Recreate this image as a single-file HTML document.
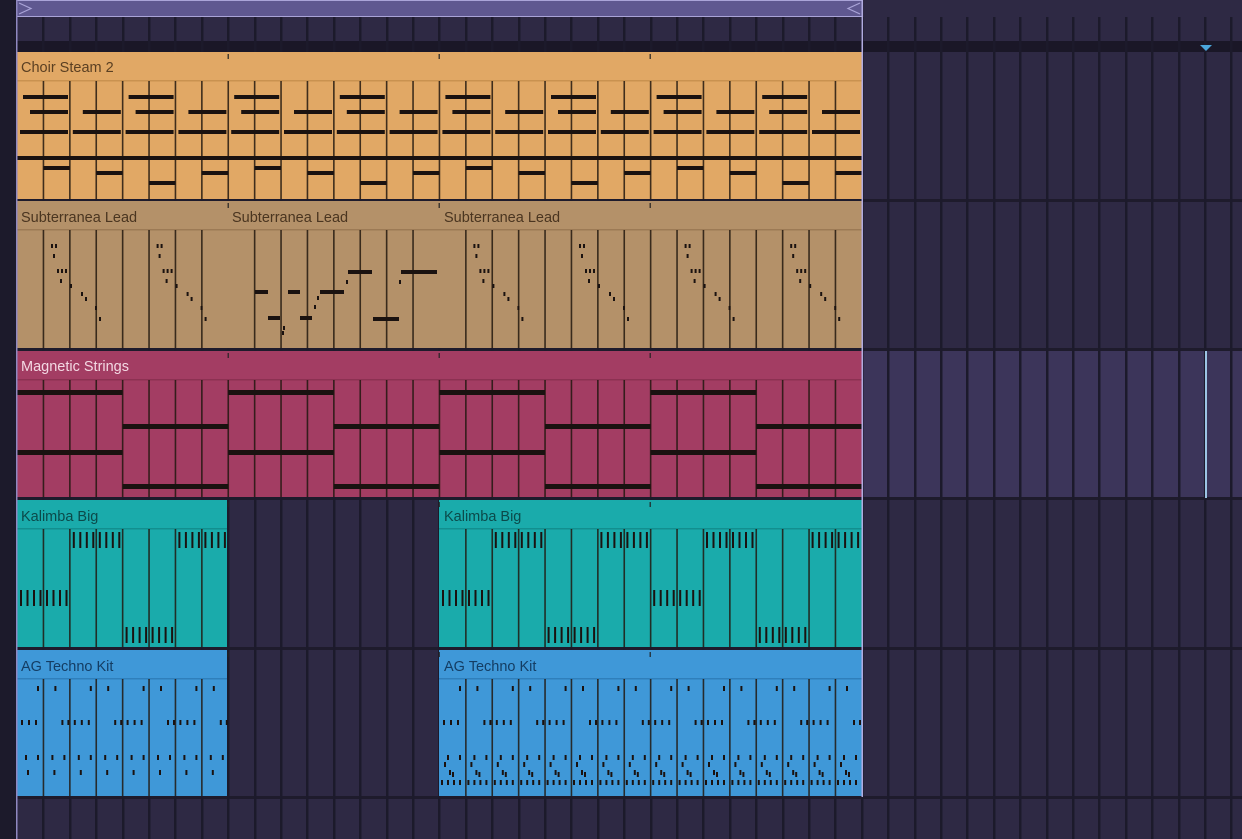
<!DOCTYPE html>
<html><head><meta charset="utf-8"><style>
html,body{margin:0;padding:0;background:#2e2944;width:1242px;height:839px;overflow:hidden}
svg{display:block}
text{font-family:"Liberation Sans",sans-serif;font-size:14.5px}
</style></head><body>
<svg id="s" width="1242" height="839" xmlns="http://www.w3.org/2000/svg">
<rect width="1242" height="839" fill="#2e2944"/>
<g id="bg"></g>
<g id="clips"></g>
<g id="notes"></g>
<g id="lines"></g>
<polyline points="19,3 31,8.5 19,14" fill="none" stroke="#aaa4d8" stroke-width="1.2"/>
<polyline points="860,3 848,8.5 860,14" fill="none" stroke="#aaa4d8" stroke-width="1.2"/>
<text x="21" y="72" fill="#5a3f22">Choir Steam 2</text>
<text x="21" y="222" fill="#4a3520">Subterranea Lead</text>
<text x="232" y="222" fill="#4a3520">Subterranea Lead</text>
<text x="444" y="222" fill="#4a3520">Subterranea Lead</text>
<text x="21" y="371" fill="#f3d8e3">Magnetic Strings</text>
<text x="21" y="521" fill="#0b4a4a">Kalimba Big</text>
<text x="444" y="521" fill="#0b4a4a">Kalimba Big</text>
<text x="21" y="671" fill="#143d63">AG Techno Kit</text>
<text x="444" y="671" fill="#143d63">AG Techno Kit</text>
</svg>
<script>
const NS="http://www.w3.org/2000/svg";
function R(g,x,y,w,h,f,o){const r=document.createElementNS(NS,"rect");r.setAttribute("x",x);r.setAttribute("y",y);r.setAttribute("width",w);r.setAttribute("height",h);r.setAttribute("fill",f);if(o)r.setAttribute("opacity",o);document.getElementById(g).appendChild(r);}
const B=26.4, X0=17, BAR=211.2;
const bx=i=>X0+B*i;
R("bg",0,0,16,839,"#1c1a2b");
R("bg",17,41,1225,11,"#1a1727");
R("bg",862,351,380,147,"#3c355a");
[[199,3],[348,3],[497,3],[647,3],[796,3]].forEach(([y,h])=>R("bg",17,y,1225,h,"#1e1b2c"));
for(let i=1;i<48;i++){R("bg",Math.round(bx(i))-1,17,2.5,822,"#1c1a2b");}
R("bg",17,0,845,17,"#5f5890");R("bg",17,0,845,1,"#aaa4d8");R("bg",17,16,845,1,"#aaa4d8");
const t=document.createElementNS(NS,"polygon");t.setAttribute("points","1200,45 1212,45 1206,51");t.setAttribute("fill","#4aa6dc");document.getElementById("bg").appendChild(t);
const clips=[
[17,52,845,147,"#e1a865","#c99250"],
[17,201,211,147,"#b49169","#9c7a55"],[228,201,211,147,"#b49169","#9c7a55"],[439,201,423,147,"#b49169","#9c7a55"],
[17,351,845,146,"#a33d63","#8c3152"],
[17,500,210,147,"#1aabab","#128f8f"],[439,500,423,147,"#1aabab","#128f8f"],
[17,650,210,146,"#3f98d8","#2f7fbb"],[439,650,423,146,"#3f98d8","#2f7fbb"]];
clips.forEach(([x,y,w,h,f,d])=>{
 R("clips",x,y,w,h,f);
 R("clips",x,y+28,w,1.5,d);
 for(let i=1;i<32;i++){const lx=bx(i);if(lx>x+1&&lx<x+w-1)R("clips",lx-0.75,y+29,1.6,h-29,"#22180f","0.85");}
});
[52,201,351,500,650].forEach(y=>{[228,439,650].forEach(x=>R("clips",x-0.5,y+2,1.5,5,"#222","0.8"));});
const K="#1a1210";
for(let b=0;b<4;b++){const o=X0+b*BAR;
 for(let h=0;h<2;h++){R("notes",o+h*105.6+6,95,45,4,K);}
 for(let q=0;q<4;q++){R("notes",o+q*52.8+13,110,38,4,K);R("notes",o+q*52.8+3,130,48,4,K);}
 [[1,168],[3,173],[5,183],[7,173]].forEach(([bt,y])=>R("notes",o+bt*B,y-2,B,4,K));
}
R("notes",17,156,845,4,K);
function sub(o){[[34,244],[38,244],[36,254],[40,269],[44,269],[48,269],[43,279],[53,284],[64,292],[68,297],[78,306],[82,317]].forEach(([dx,y])=>R("notes",o+dx,y,2,4,K));}
[0,105.6,422.4,528,633.6,739.2].forEach(d=>sub(X0+d));
[[255,290,13],[288,290,12],[268,316,12],[300,316,12],[320,290,24],[348,270,24],[401,270,36],[373,317,26]].forEach(([x,y,w])=>R("notes",x,y,w,4,K));
[[283,326],[314,305],[317,296],[346,280],[399,280],[282,331]].forEach(([x,y])=>R("notes",x,y,2,4,K));
for(let b=0;b<4;b++){const o=X0+b*BAR;
 R("notes",o,390,105.6,5,K);R("notes",o,450,105.6,5,K);
 R("notes",o+105.6,424,105.6,5,K);R("notes",o+105.6,484,105.6,5,K);}
function kal(o){
 const grp=(x,y)=>{for(let k=0;k<8;k++)R("notes",x+3+k*6.5,y,2,16,K);};
 grp(o+2*B,532);grp(o+6*B,532);grp(o,590);grp(o+4*B,627);}
[X0,439,439+BAR].forEach(kal);
function tech(o,dense){
 for(let bt=0;bt<8;bt++){const x=o+bt*B;
  if(bt%2==0){R("notes",x+20,686,2,5,K);}else R("notes",x+11,686,2,5,K);
  if(bt%2==0){[4,11,18].forEach(d=>R("notes",x+d,720,2,5,K));}
  R("notes",x+8,755,2,5,K);R("notes",x+20,755,2,5,K);
  R("notes",x+10,770,2,5,K);
  if(dense){R("notes",x+5,762,2,5,K);[2,8,14,20].forEach(d=>R("notes",x+d,780,2,5,K));R("notes",x+13,772,2,5,K);}
 }
 for(let bt=1;bt<8;bt+=2)[18,24].forEach(d=>R("notes",o+(bt-1)*B+d+B,720,2,5,K));
}
tech(X0,false);tech(439,true);tech(439+BAR,true);
R("lines",16,0,1.5,839,"#8f88c0");
R("lines",861.5,0,1.5,797,"#b1abe0");
R("lines",1205,351,2,147,"#9cc4e4");
</script>
</body></html>
